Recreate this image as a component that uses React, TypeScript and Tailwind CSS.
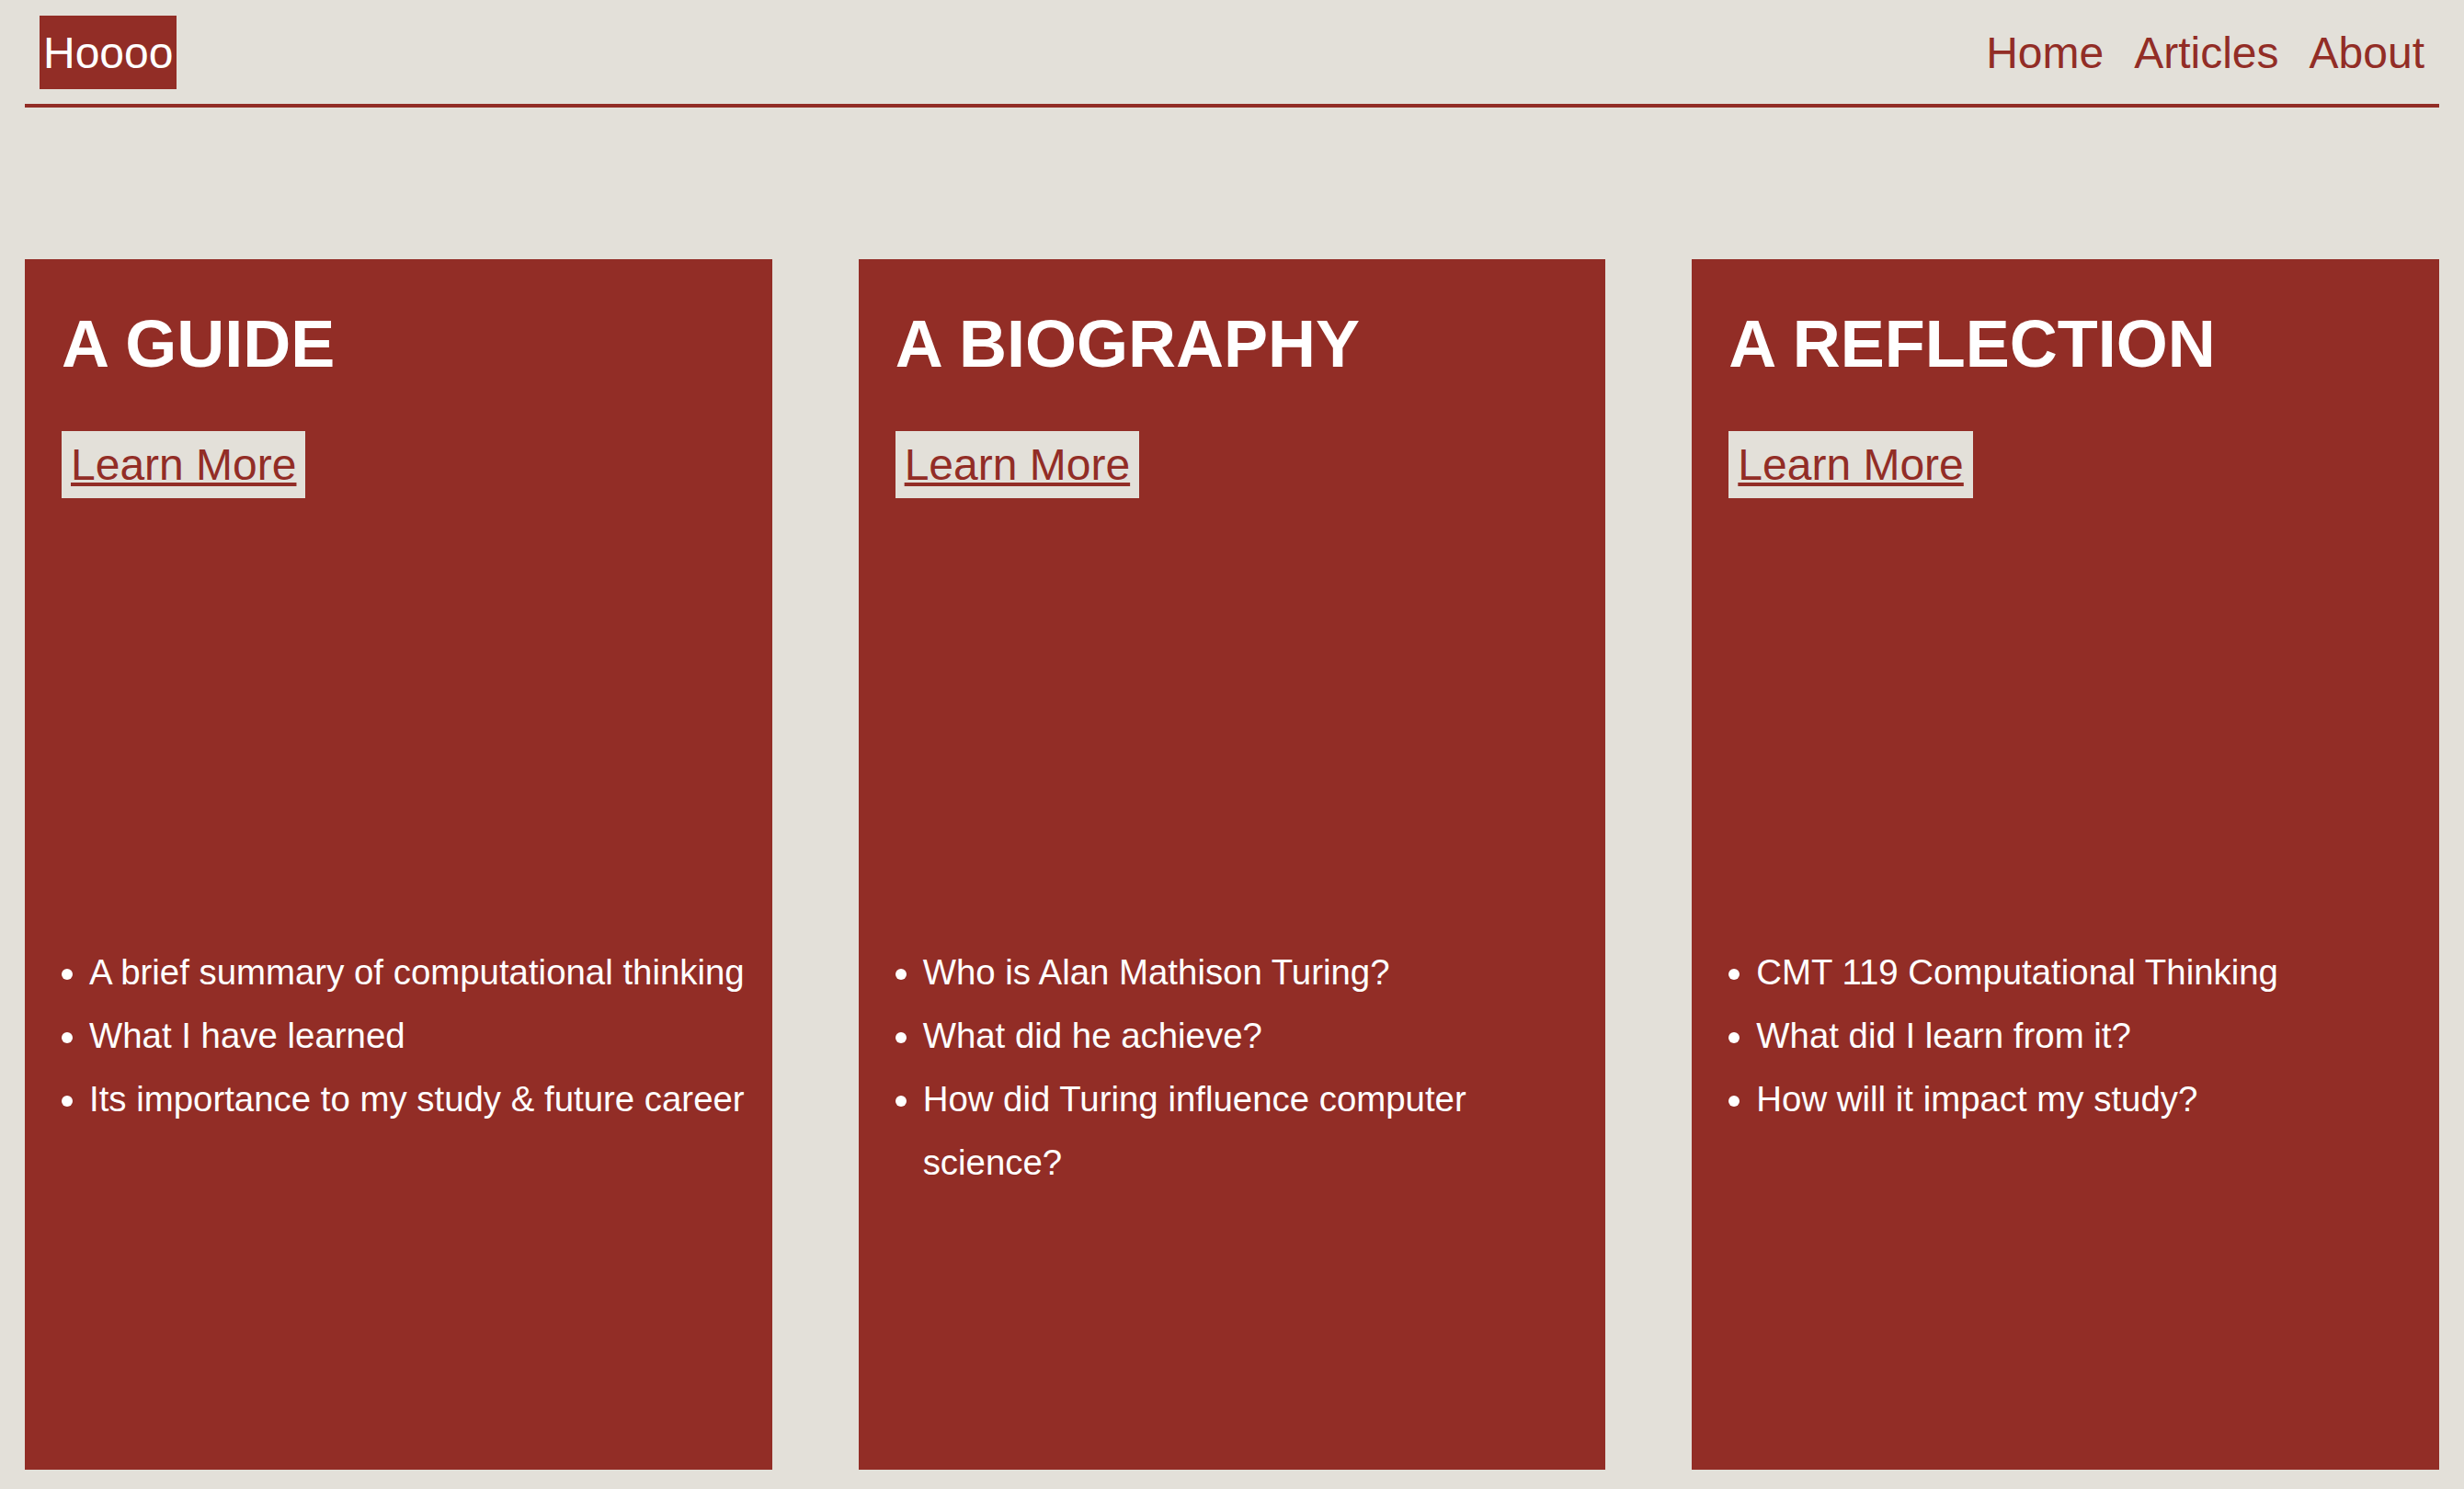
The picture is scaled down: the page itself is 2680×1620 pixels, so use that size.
const cards = [
  {
    title: "A GUIDE",
    points: [
      "A brief summary of computational thinking",
      "What I have learned",
      "Its importance to my study & future career",
    ],
  },
  {
    title: "A BIOGRAPHY",
    points: [
      "Who is Alan Mathison Turing?",
      "What did he achieve?",
      "How did Turing influence computer science?",
    ],
  },
  {
    title: "A REFLECTION",
    points: [
      "CMT 119 Computational Thinking",
      "What did I learn from it?",
      "How will it impact my study?",
    ],
  },
]

const Card = ({ title, points }: { title: string, points: string[] }) => {
  return (
    <section className="h-[1317px] bg-[#922d26] pl-[40px] pr-6 pt-[51px]">
      <h2 className="text-[72px] font-bold leading-[83px] text-white">{title}</h2>
      <a href="#" className="mt-[53px] block w-fit bg-[#e3e0d9] px-[10px] py-[9px] text-[48px] leading-[55px] text-[#922d26] underline decoration-[4px] underline-offset-[3px]">
        Learn More
      </a>
      <ul className="mt-[481px] list-disc pl-[30px] text-[38.4px] leading-[69px] text-white">
        {points.map((p) => (
          <li key={p}>{p}</li>
        ))}
      </ul>
    </section>
  )
}

export default function App() {
  return (
    <div className="min-h-screen bg-[#e3e0d9] px-[27px] font-['Liberation_Sans',Arial,sans-serif]">
      <header className="flex items-center justify-between border-b-4 border-[#922d26] px-4 pt-[17px] pb-4">
        <a href="#" className="bg-[#922d26] px-1 py-[12.5px] text-[48px] leading-[55px] text-white">
          Hoooo
        </a>
        <nav className="flex gap-[33px] text-[48px] leading-[55px] text-[#922d26]">
          <a href="#">Home</a>
          <a href="#">Articles</a>
          <a href="#">About</a>
        </nav>
      </header>

      <main className="mt-[165px] grid grid-cols-3 gap-[94px]">
        {cards.map((c) => (
          <Card key={c.title} title={c.title} points={c.points} />
        ))}
      </main>
    </div>
  )
}
